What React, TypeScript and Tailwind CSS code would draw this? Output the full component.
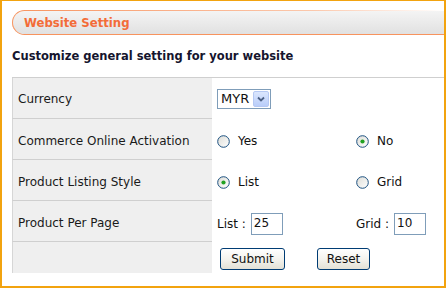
import React from "react";

const fontStack = "'DejaVu Sans', Verdana, sans-serif";

function Radio({ checked }: { checked?: boolean }) {
  return (
    <svg width="13" height="13" viewBox="0 0 13 13" className="shrink-0">
      <defs>
        <linearGradient id={checked ? "rg1" : "rg0"} x1="0" y1="0" x2="1" y2="1">
          <stop offset="0" stopColor="#dcdcd6" />
          <stop offset="1" stopColor="#ffffff" />
        </linearGradient>
      </defs>
      <circle cx="6.5" cy="6.5" r="5.8" fill={`url(#${checked ? "rg1" : "rg0"})`} stroke="#1c5180" strokeWidth="1" />
      {checked && <circle cx="6.5" cy="6.5" r="2.1" fill="#21a121" />}
    </svg>
  );
}

function Choice({ label, checked }: { label: string; checked?: boolean }) {
  return (
    <div className="flex items-center gap-[8px] text-[12px] text-[#111]">
      <Radio checked={checked} />
      <span>{label}</span>
    </div>
  );
}

function Label({ children, last, first }: { children?: React.ReactNode; last?: boolean; first?: boolean }) {
  return (
    <div
      className={`flex items-center bg-[#efefef] border-l border-[#d6d6d6] pl-[5px] text-[12px] text-[#1a1a1a] ${
        first ? "pt-px" : "pt-[3px]"
      } ${last ? "h-[31px]" : "h-[41px] border-b border-b-[#cfcfcf]"}`}
    >
      {children}
    </div>
  );
}

function Cell({ children, className = "" }: { children?: React.ReactNode; className?: string }) {
  return <div className={`flex items-center pl-[5px] ${className}`}>{children}</div>;
}

function Box({ value }: { value: string }) {
  return (
    <div className="w-[32px] h-[22px] border border-[#7f9db9] bg-white pl-[2px] text-[12px] leading-[18px] text-[#111]">
      {value}
    </div>
  );
}

function Button({ label, w }: { label: string; w: string }) {
  return (
    <button
      className={`${w} h-[22px] rounded-[3px] border border-[#003c74] bg-gradient-to-b from-white via-[#f4f3ee] to-[#e3e1d6] text-[12px] text-[#111] leading-none`}
    >
      {label}
    </button>
  );
}

export default function App() {
  return (
    <div
      className="w-[446px] h-[288px] overflow-hidden bg-white border-[#f2a30f] border-l-2 border-r-2 border-t border-b-2 pl-[10px] pt-[9px]"
      style={{ fontFamily: fontStack }}
    >
      {/* header bar */}
      <div className="h-[25px] rounded-l-[13px] bg-gradient-to-r from-[#f7935e] via-[#fbc8ac] via-70% to-white pt-px pl-px border-b border-b-[#f7935e]">
        <div className="h-full rounded-tl-[12px] rounded-bl-[12px] bg-gradient-to-b from-[#f4f4f4] to-[#e1e1e1] flex items-center pl-[11px]">
          <span
            className="text-[13px] font-bold text-[#f36c38]"
            style={{ fontFamily: "'DejaVu Sans Condensed', 'DejaVu Sans', sans-serif" }}
          >
            Website Setting
          </span>
        </div>
      </div>

      <div className="h-[42px] flex items-center pt-px text-[11.5px] font-bold text-[#15152e]">
        Customize general setting for your website
      </div>

      {/* settings table */}
      <div className="border-t border-[#cfcfcf] grid grid-cols-[200px_139px_1fr]">
        <Label first>Currency</Label>
        <Cell className="col-span-2">
          <div className="w-[54px] h-[20px] border border-[#7f9db9] bg-white flex items-center justify-between pl-[3px] pr-px">
            <span className="text-[13px] text-[#111]">MYR</span>
            <div className="w-[16px] h-[16px] rounded-[2px] border border-[#b5c8f3] bg-gradient-to-b from-[#dbe6fd] to-[#b9cdf9] flex items-center justify-center">
              <svg width="8" height="6" viewBox="0 0 8 6">
                <path d="M1 1.5 L4 4.5 L7 1.5" fill="none" stroke="#4d6185" strokeWidth="1.8" />
              </svg>
            </div>
          </div>
        </Cell>

        <Label>Commerce Online Activation</Label>
        <Cell className="pt-[3px]">
          <Choice label="Yes" />
        </Cell>
        <Cell className="pt-[3px]">
          <Choice label="No" checked />
        </Cell>

        <Label>Product Listing Style</Label>
        <Cell className="pt-[3px]">
          <Choice label="List" checked />
        </Cell>
        <Cell className="pt-[3px]">
          <Choice label="Grid" />
        </Cell>

        <Label>Product Per Page</Label>
        <Cell className="pt-[4px] gap-[5px] text-[12px] text-[#111]">
          <span>List :</span>
          <Box value="25" />
        </Cell>
        <Cell className="pt-[4px] gap-[5px] text-[12px] text-[#111]">
          <span>Grid :</span>
          <Box value="10" />
        </Cell>

        <Label last />
        <Cell className="col-span-2 pl-[8px] pt-[2px] gap-[32px]">
          <Button label="Submit" w="w-[65px]" />
          <Button label="Reset" w="w-[53px]" />
        </Cell>
      </div>
    </div>
  );
}
